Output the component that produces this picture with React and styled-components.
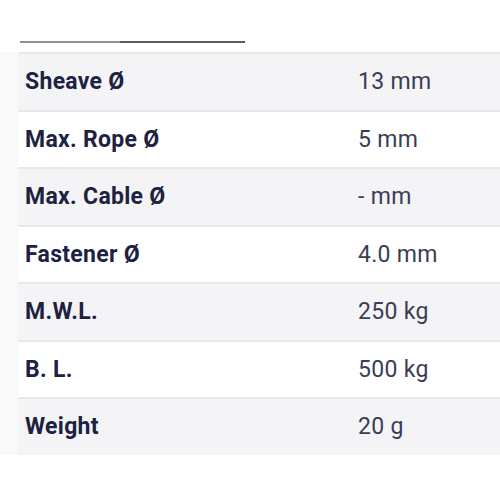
import React from 'react';
import styled, { createGlobalStyle } from 'styled-components';

const GlobalStyle = createGlobalStyle`
  html, body {
    margin: 0;
    padding: 0;
    background: #ffffff;
    font-family: Roboto, "Liberation Sans", sans-serif;
  }
`;

const Page = styled.div`
  width: 500px;
  height: 500px;
  overflow: hidden;
  background: #ffffff;
  padding-top: 41px;
  box-sizing: border-box;
`;

const TabLine = styled.div`
  display: flex;
  margin-left: 20px;
  height: 2px;
`;

const TabSegment = styled.div`
  width: ${(p) => p.width}px;
  background: ${(p) => (p.active ? '#5a5d62' : '#8c8f94')};
`;

const Body = styled.div`
  display: flex;
  margin-top: 9px;
`;

const Gutter = styled.div`
  width: 18px;
  background: #f9f9fa;
`;

const Table = styled.div`
  flex: 1;
  border-top: 2px solid #e8e8eb;
`;

const Row = styled.div`
  display: grid;
  grid-template-columns: 333px 1fr;
  align-items: center;
  height: 55.5px;
  padding-left: 7px;
  background: ${(p) => (p.striped ? '#f4f4f6' : '#ffffff')};
  border-bottom: ${(p) => (p.last ? 'none' : '2px solid #e8e8eb')};
`;

const Label = styled.div`
  font-weight: 700;
  font-size: 23px;
  color: #1e2242;
  letter-spacing: 0.3px;
`;

const Value = styled.div`
  font-size: 23px;
  color: #3a3d54;
  letter-spacing: 0.3px;
`;

const specs = [
  ['Sheave Ø', '13 mm'],
  ['Max. Rope Ø', '5 mm'],
  ['Max. Cable Ø', '- mm'],
  ['Fastener Ø', '4.0 mm'],
  ['M.W.L.', '250 kg'],
  ['B. L.', '500 kg'],
  ['Weight', '20 g'],
];

export default function App() {
  return (
    <Page>
      <GlobalStyle />
      <TabLine>
        <TabSegment width={100} />
        <TabSegment width={125} active />
      </TabLine>
      <Body>
        <Gutter />
        <Table>
          {specs.map(([label, value], i) => (
            <Row key={label} striped={i % 2 === 0} last={i === specs.length - 1}>
              <Label>{label}</Label>
              <Value>{value}</Value>
            </Row>
          ))}
        </Table>
      </Body>
    </Page>
  );
}
